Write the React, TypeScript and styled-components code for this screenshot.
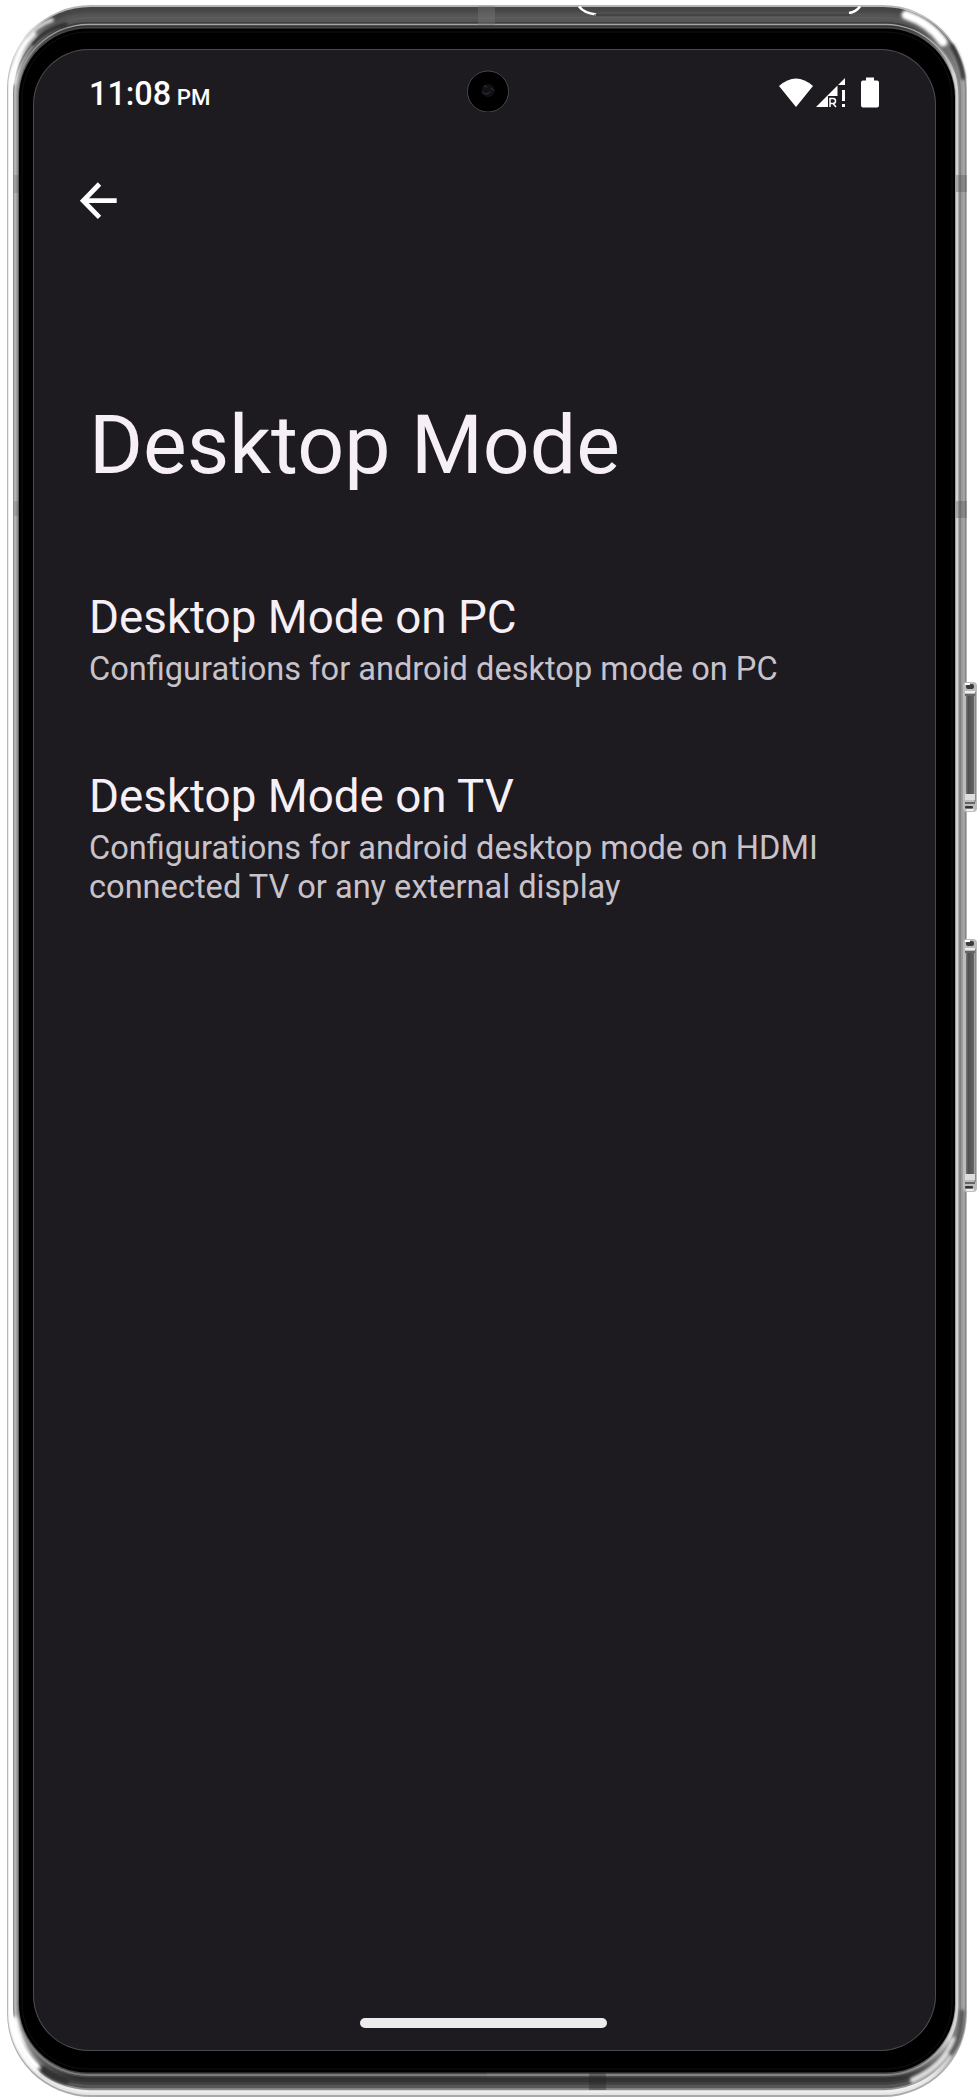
import React from "react";
import styled, { createGlobalStyle } from "styled-components";

const GlobalStyle = createGlobalStyle`
  html, body { margin: 0; background: #fff; }
  body { overflow: hidden; }
`;

const Device = styled.main`
  position: relative;
  box-sizing: border-box;
  width: 978px;
  height: 2100px;
  padding: 49px 42px 49px 33px;
  font-family: Roboto, "Liberation Sans", sans-serif;
`;

const Shell = styled.svg`
  position: absolute;
  inset: 0;
  display: block;
`;

const Screen = styled.section`
  position: relative;
  box-sizing: border-box;
  height: 2002px;
  display: flex;
  flex-direction: column;
  overflow: hidden;
  border-radius: 56px;
  background: #1d1a20;
  box-shadow: inset 0 0 0 1px #4c4a4e;
  color: #f6eff6;
`;

const StatusBar = styled.header`
  display: flex;
  align-items: flex-start;
  justify-content: space-between;
  height: 84px;
  padding: 0 56px 0 56px;
`;

const Clock = styled.div`
  padding-top: 25px;
  font-size: 32.4px;
  line-height: 40px;
  font-weight: 500;
  color: #fff;
  white-space: pre;
`;

const Meridiem = styled.span`
  font-size: 22.3px;
`;

const StatusIcons = styled.svg`
  display: block;
  margin-top: 27px;
`;

const Toolbar = styled.nav`
  height: 180px;
  padding: 48px 0 0 45px;
  box-sizing: border-box;
`;

const BackButton = styled.button`
  display: block;
  padding: 0;
  border: 0;
  background: none;
  color: #fff;
`;

const Title = styled.h1`
  margin: 82px 0 0;
  padding-left: 56px;
  font-size: 82.4px;
  line-height: 100px;
  font-weight: 400;
`;

const Preferences = styled.ul`
  list-style: none;
  margin: 91px 0 0;
  padding: 0 56px;
`;

const Preference = styled.li`
  margin-bottom: 76.5px;
`;

const PreferenceTitle = styled.div`
  font-size: 45.75px;
  line-height: 64px;
`;

const Summary = styled.div`
  font-size: 32.6px;
  line-height: 38.5px;
  color: #c8c3ca;
  white-space: pre-line;
`;

const HomeHandle = styled.div`
  width: 247px;
  height: 10px;
  margin: auto auto 23.5px;
  border-radius: 5px;
  background: #ececec;
  transform: translateX(-1px);
`;

// t: depth into the metal, then colours for the top, left, right and bottom edges
type Band = [number, string, string, string, string];
const bands: Band[] = [
  [0, "#b5b5b5", "#b5b5b5", "#b8b8b8", "#aaaaaa"],
  [0.08, "#444444", "#eeeeee", "#858585", "#e4e4e4"],
  [0.17, "#464646", "#ffffff", "#a2a2a2", "#eeeeee"],
  [0.28, "#4d4d4d", "#ffffff", "#a6a6a6", "#8c8c8c"],
  [0.36, "#545454", "#ffffff", "#999999", "#565656"],
  [0.5, "#5b5b5b", "#8a8a8a", "#808080", "#404040"],
  [0.6, "#565656", "#bcbcbc", "#8c8c8c", "#343434"],
  [0.72, "#3f3f3f", "#a8a8a8", "#d5d5d5", "#2c2c2c"],
  [0.8, "#a5a5a5", "#9c9c9c", "#d7d7d7", "#444444"],
  [0.86, "#303030", "#888888", "#d0d0d0", "#7a7a7a"],
  [0.94, "#464646", "#555555", "#8c8c8c", "#444444"],
  [1, "#000000", "#000000", "#000000", "#000000"],
];

const Keys = [
  { y: 682, h: 130 },
  { y: 939, h: 253 },
];

function SideKey({ y, h }: { y: number; h: number }) {
  return (
    <g>
      <rect x="963" y={y} width="14" height={h} rx="4" fill="#bcbcbc" />
      <rect x="966" y={y + 14} width="8" height={h - 28} fill="url(#key)" />
      <rect x="974.5" y={y + 10} width="1.5" height={h - 20} fill="#8b8b8b" />
      <rect x="966" y={y + 2} width="8" height="5" rx="2" fill="#3c3c3c" />
      <rect x="965" y={y + 1} width="5" height="2" fill="#fff" />
      <rect x="965" y={y + 9} width="10" height="2" fill="#eee" />
      <rect x="965" y={y + 12} width="10" height="2" fill="#666" />
      <rect x="965" y={y + h - 18} width="10" height="6" fill="#ddd" />
      <rect x="965" y={y + h - 10} width="10" height="2" fill="#666" />
      <rect x="965" y={y + h - 6} width="8" height="2.5" rx="1" fill="#333" />
      <rect x="966" y={y + h - 3} width="8" height="2" rx="1" fill="#eee" />
    </g>
  );
}

function DeviceShell() {
  return (
    <Shell width="978" height="2100" viewBox="0 0 978 2100" aria-hidden="true">
      <defs>
        <clipPath id="half-left"><rect width="487" height="2100" /></clipPath>
        <clipPath id="half-right"><rect x="487" width="491" height="2100" /></clipPath>
        <linearGradient id="key"><stop stopColor="#777" /><stop offset=".3" stopColor="#505050" /><stop offset="1" stopColor="#666" /></linearGradient>
        <filter id="soft"><feGaussianBlur stdDeviation="1.6" /></filter>
        {bands.map(([, top, left, right, bottom], i) =>
          [left, right].map((side, s) => (
            <linearGradient key={`${i}-${s}`} id={`b${i}-${s}`} gradientUnits="userSpaceOnUse" x1="0" y1="0" x2="0" y2="2100">
              <stop offset=".012" stopColor={top} />
              <stop offset=".036" stopColor={side} />
              <stop offset=".97" stopColor={side} />
              <stop offset=".99" stopColor={bottom} />
            </linearGradient>
          ))
        )}
      </defs>
      {["left", "right"].map((side, s) => (
        <g key={side} clipPath={`url(#half-${side})`}>
          {bands.map(([t], i) => (
            <rect
              key={i}
              x={7 + 12 * t}
              y={5 + 23.5 * t}
              width={960 - 24 * t}
              height={2092 - 48 * t}
              rx={84 - 15 * t}
              fill={`url(#b${i}-${s})`}
            />
          ))}
        </g>
      ))}
      <g filter="url(#soft)" fill="none" strokeLinecap="round">
        <path d="M12.500 82Q15 50 33 34" stroke="#fff" strokeWidth="6" />
        <path d="M27 37Q38 25 52 20" stroke="#ddd" strokeWidth="4" />
        <path d="M33 44Q44 30 66 24" stroke="#222" strokeWidth="3" />
        <path d="M906 15Q930 23 943 42" stroke="#fff" strokeWidth="9" />
        <path d="M952 46Q961 62 963 78" stroke="#333" strokeWidth="4" />
        <path d="M44 2070Q52 2077 66 2081" stroke="#333" strokeWidth="7" />
        <path d="M14 2020Q19 2050 36 2066" stroke="#fff" strokeWidth="7" />
        <path d="M953 2040Q944 2066 913 2080" stroke="#ddd" strokeWidth="6" />
        <path d="M962 2012Q961 2040 951 2053" stroke="#555" strokeWidth="5" />
      </g>
      <rect x="22" y="32" width="930" height="2037" rx="66" fill="none" stroke="#111" />
      <rect x="478" y="6" width="17" height="19" fill="#777" opacity=".4" />
      <rect x="589" y="2073" width="17" height="17" fill="#222" opacity=".35" />
      <g fill="none" stroke="#fff" strokeWidth="2.5">
        <path d="M579 6.500Q584 13 596 14.500" />
        <path d="M860 6.500Q856 12 849 13" />
      </g>
      <path d="M594 15H850" stroke="#333" />
      <path d="M14 175h5v18h-5zM14 501h5v15h-5z" fill="#444" opacity=".2" />
      <path d="M956 175h11v17h-11zM956 501h11v17h-11z" fill="#444" opacity=".3" />
      {Keys.map((k) => <SideKey key={k.y} {...k} />)}
    </Shell>
  );
}

const CameraLens = styled.svg`
  position: absolute;
  left: 434px;
  top: 21px;
`;

export default function App() {
  return (
    <>
      <GlobalStyle />
      <Device>
        <DeviceShell />
        <Screen>
          <CameraLens width="42" height="42" viewBox="0 0 42 42">
            <circle cx="21" cy="21.500" r="20.500" fill="#000" stroke="#555" strokeWidth=".8" />
            <circle cx="21" cy="20.500" r="6.500" fill="#111014" />
            <path d="M15 22q4 4 8 0M17 16l3 1m4 1 3 3" stroke="#343238" fill="none" />
          </CameraLens>
          <StatusBar>
            <Clock>11:08<Meridiem> PM</Meridiem></Clock>
            <StatusIcons width="102" height="32" viewBox="778 76 102 32" fill="#fff">
              <path d="M779 86Q796 71 813 86L796 107Z" />
              <path d="M816 107L837.500 85.500V96H828V107ZM838 85L845 78V85Z" />
              <path d="M830 107V98.500h3q2.500 0 2.500 2.500t-2.500 2.500h-3m3 0 3 3.500" fill="none" stroke="#fff" strokeWidth="1.500" />
              <path d="M842 90h3v11h-3zM842 104h3v3h-3z" />
              <path d="M866 77.500h8v3h3q2 0 2 2v23q0 2-2 2h-14q-2 0-2-2v-23q0-2 2-2h3z" />
            </StatusIcons>
          </StatusBar>
          <Toolbar>
            <BackButton aria-label="Back">
              <svg width="40" height="40" viewBox="0 0 40 40" fill="none" stroke="currentColor" strokeWidth="4.800">
                <path d="M38.700 19.700H6M21.500 3L5.200 19.700L21.500 36.400" />
              </svg>
            </BackButton>
          </Toolbar>
          <Title>Desktop Mode</Title>
          <Preferences>
            <Preference>
              <PreferenceTitle>Desktop Mode on PC</PreferenceTitle>
              <Summary>Configurations for android desktop mode on PC</Summary>
            </Preference>
            <Preference>
              <PreferenceTitle>Desktop Mode on TV</PreferenceTitle>
              <Summary>{"Configurations for android desktop mode on HDMI\nconnected TV or any external display"}</Summary>
            </Preference>
          </Preferences>
          <HomeHandle />
        </Screen>
      </Device>
    </>
  );
}
